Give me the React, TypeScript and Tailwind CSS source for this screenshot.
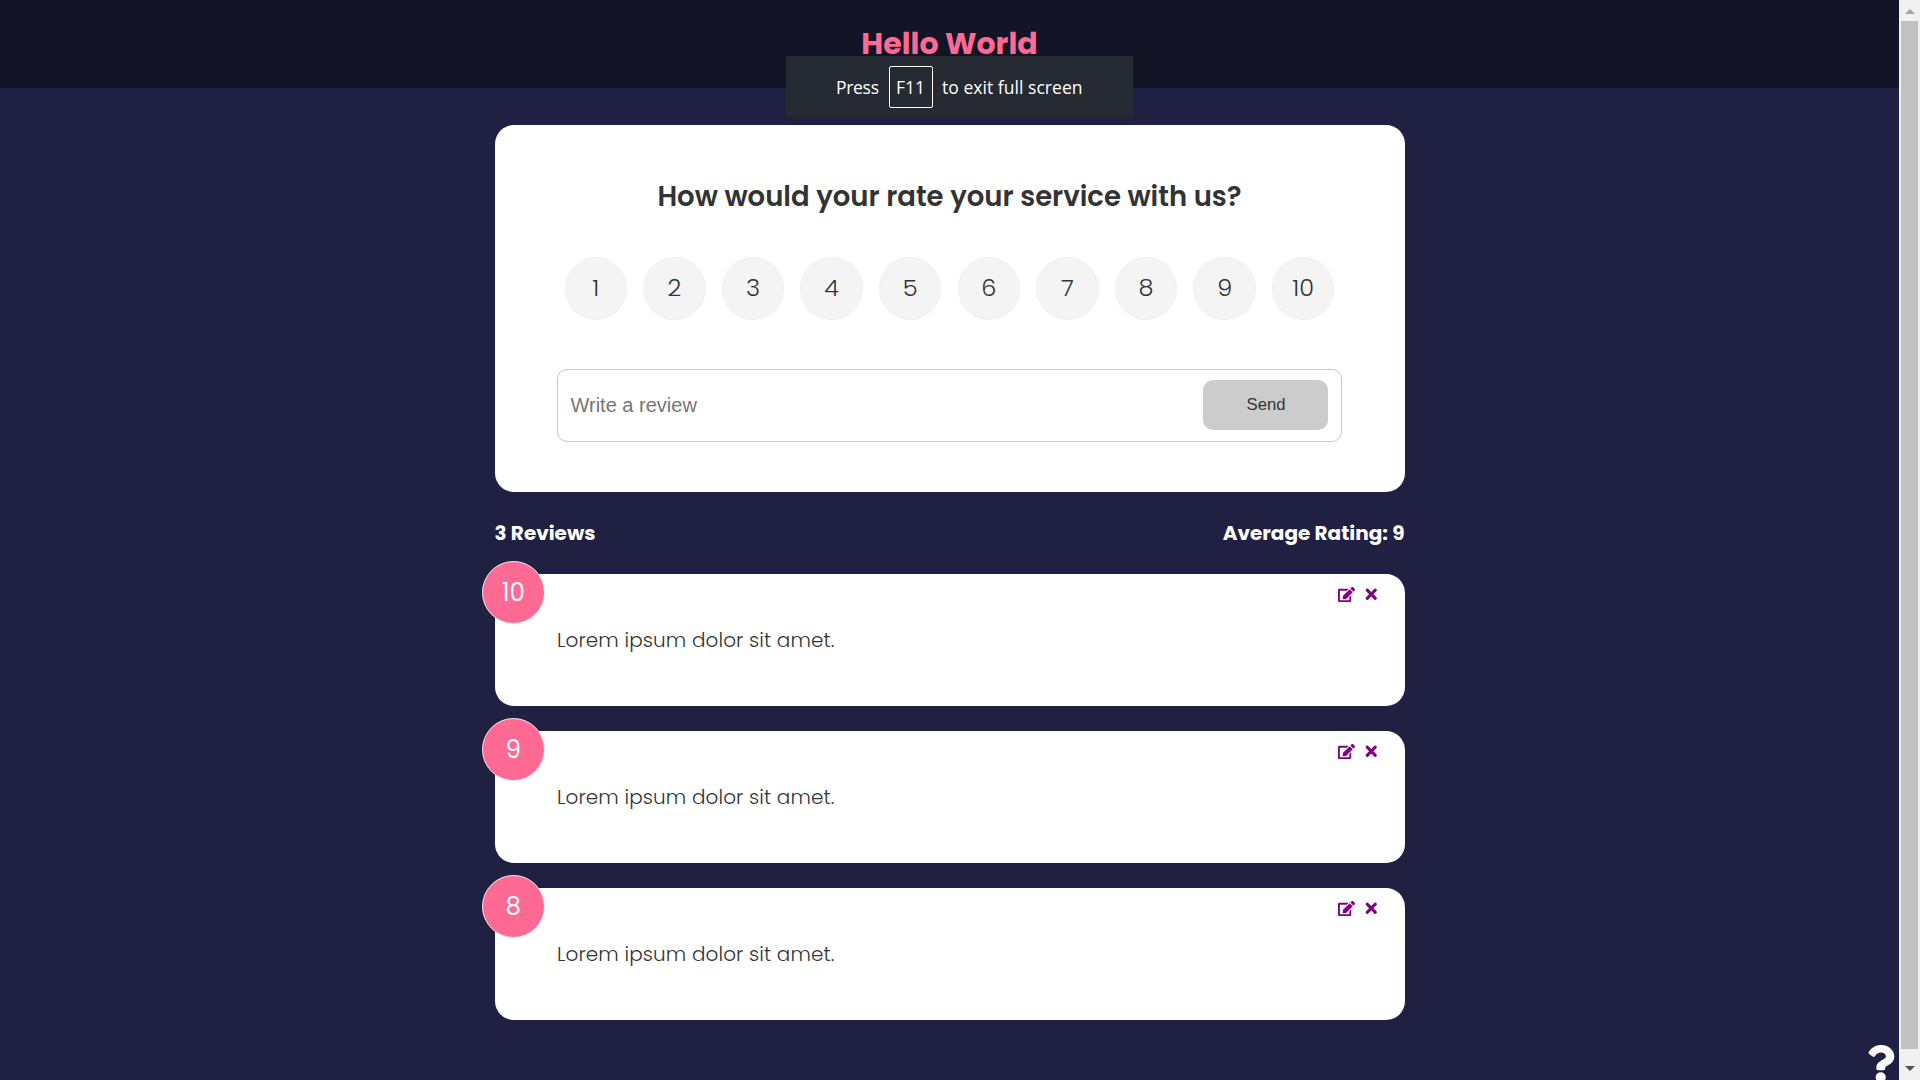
import { FaEdit, FaTimes, FaQuestion } from "react-icons/fa";

const ratings = [1, 2, 3, 4, 5, 6, 7, 8, 9, 10];
const reviews = [
  { rating: 10, text: "Lorem ipsum dolor sit amet." },
  { rating: 9, text: "Lorem ipsum dolor sit amet." },
  { rating: 8, text: "Lorem ipsum dolor sit amet." },
];

export default function App() {
  return (
    <div className="relative flex h-[1080px] w-[1920px] overflow-hidden bg-[#202142] font-['Poppins','Inter',sans-serif]">
      <div className="flex w-[1899px] flex-col items-center">
        <header className="flex h-[88px] w-full justify-center bg-[#131426] pt-[22px]">
          <h1 className="text-[30px] font-bold leading-[44px] text-[#ff6a95]">Hello World</h1>
        </header>
        <main className="w-[910px] pt-[37px]">
          <section className="flex h-[367px] flex-col rounded-[19px] bg-white pl-[62px] pr-[63px] pt-[51px] text-[#333]">
            <h2 className="pl-px text-center text-[27.5px] font-semibold leading-[42px]">How would your rate your service with us?</h2>
            <ul className="mt-[39px] flex justify-between pl-[8px] pr-[7px]">
              {ratings.map((r) => (
                <li key={r} className="flex size-[62.5px] items-center justify-center rounded-full border border-[#f0f0f0] bg-[#f4f4f4] pb-px text-[24px] font-light">{r}</li>
              ))}
            </ul>
            <div className="mt-[49.5px] flex h-[73px] items-center justify-between rounded-[10px] border border-[#c6c6c6] pb-[2px] pl-[13px] pr-[13px] font-['Liberation_Sans',sans-serif]">
              <span className="text-[20px] text-[#757575]">Write a review</span>
              <button className="h-[50px] w-[125px] rounded-[10px] bg-[#ccc] pl-[2px] text-[16.67px] text-[#333]">Send</button>
            </div>
          </section>
          <div className="flex h-[82px] items-center justify-between text-[20px] font-bold text-white">
            <span>3 Reviews</span>
            <span>Average Rating: 9</span>
          </div>
          <div className="flex flex-col gap-[25px]">
            {reviews.map((r) => (
              <article key={r.rating} className="relative h-[132px] rounded-[19px] bg-white pl-[62.5px] pt-[50px] text-[#333]">
                <span className="absolute -left-[12.5px] -top-[13px] flex size-[62.5px] items-center justify-center rounded-full border border-[#eee] bg-[#ff6a95] pt-[3px] text-[24.5px] text-white">{r.rating}</span>
                <div className="absolute right-[25.5px] top-[12px] flex items-center gap-[8px] text-[#800080]">
                  <FaEdit className="size-[17px]" />
                  <FaTimes className="size-[16.5px]" />
                </div>
                <p className="text-[20px] font-light leading-[32px] tracking-[0.1px]">{r.text}</p>
              </article>
            ))}
          </div>
        </main>
      </div>
      <div className="flex w-[21px] flex-col items-center bg-[#f1f1f1]">
        <svg className="h-[21px] w-[10px]" viewBox="0 0 10 21"><path d="M0 14L5 9L10 14Z" fill="#a3a3a3" /></svg>
        <div className="h-[1028px] w-[17px] bg-[#c1c1c1]" />
        <svg className="h-[31px] w-[10px]" viewBox="0 0 10 31"><path d="M0 17L5 22L10 17Z" fill="#505050" /></svg>
      </div>
      <FaQuestion className="absolute left-[1862px] top-[1045px] text-[37.5px] text-white" />
      <div className="absolute left-[786px] top-[56px] flex h-[60px] w-[347px] items-start bg-[#262b33] pl-[50px] pt-[10px] font-['Open_Sans',sans-serif] text-[17.5px] leading-[43px] text-white shadow-[0_2px_3px_-1px_#262b33]">
        <span className="w-[53px] tracking-[-0.3px]">Press</span>
        <kbd className="mr-[9px] flex h-[42px] w-[44px] items-center justify-center rounded-[2px] border border-white pr-px font-['Open_Sans',sans-serif]">F11</kbd>
        <span className="tracking-[0.04px]">to exit full screen</span>
      </div>
    </div>
  );
}
